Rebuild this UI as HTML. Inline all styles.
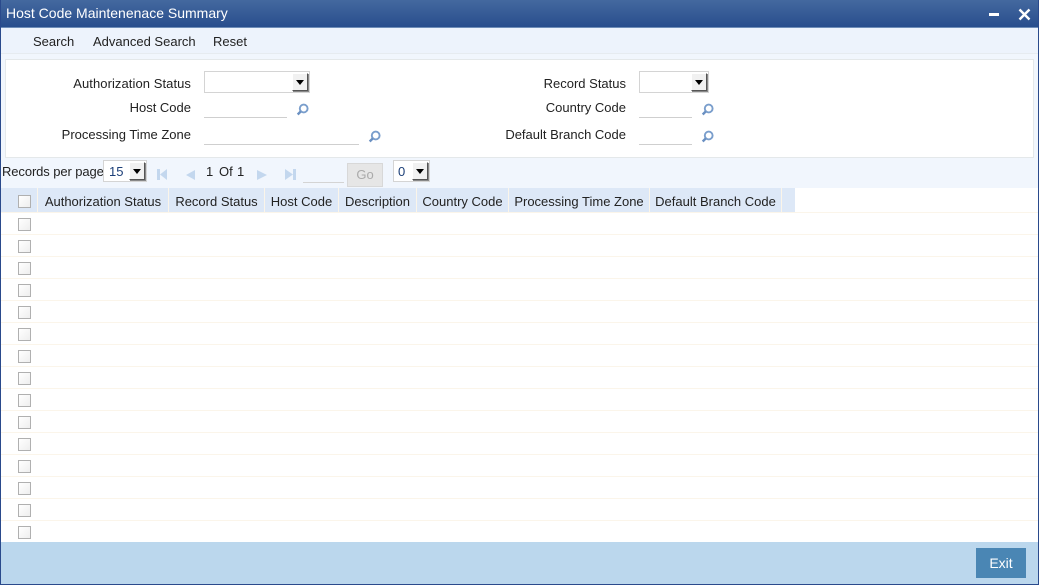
<!DOCTYPE html>
<html><head><meta charset="utf-8">
<style>
html,body{margin:0;padding:0}
body{width:1039px;height:585px;position:relative;overflow:hidden;background:#f1f6fd;font-family:"Liberation Sans",Arial,sans-serif;font-size:13px;color:#222}
.a{position:absolute}
.t{position:absolute;white-space:nowrap;line-height:16px;height:16px}
.r{text-align:right}
.ul{position:absolute;height:1px;background:#cfcfcf}
.sel{position:absolute;background:#fff;border:1px solid #d4d4d4;box-sizing:border-box}
.btn{position:absolute;width:16px;height:18px;box-sizing:border-box;background:#f1f1f1;border:1px solid;border-color:#fff #555 #555 #fff;box-shadow:1px 1px 0 #888}
.btn:after{content:"";position:absolute;left:3px;top:6px;border:4px solid transparent;border-top:5px solid #000;border-bottom:0}
.cb{position:absolute;left:18px;width:13px;height:13px;box-sizing:border-box;border:1px solid #b0b0b0;background:linear-gradient(135deg,#fff,#eee)}
.th{position:absolute;top:188px;height:24px;background:#dde8f7;line-height:27px;white-space:nowrap;text-align:center;border-right:1px solid #fbf5ea;box-sizing:border-box}
.ln{position:absolute;left:1px;right:1px;height:1px;background:#fbf5ea}
</style></head><body>
<div class="a" style="left:0;top:0;width:1039px;height:28px;background:linear-gradient(#44699f,#284e8d);border-bottom:1px solid #6e8db8;box-sizing:border-box"></div>
<div class="t" style="left:6px;top:5px;color:#fff;font-size:14px">Host Code Maintenenace Summary</div>
<div class="a" style="left:989px;top:13px;width:10px;height:3px;background:#fff"></div>
<svg class="a" style="left:1018px;top:8px" width="13" height="13"><path d="M1.5 1.5L11.5 11.5M11.5 1.5L1.5 11.5" stroke="#fff" stroke-width="2.4"/></svg>

<div class="a" style="left:1px;top:28px;width:1037px;height:25px;background:#edf3fc;border-bottom:1px solid #e6ebf0"></div>
<div class="t" style="left:33px;top:34px">Search</div>
<div class="t" style="left:93px;top:34px">Advanced Search</div>
<div class="t" style="left:213px;top:34px">Reset</div>

<div class="a" style="left:5px;top:59px;width:1029px;height:99px;background:#fff;border:1px solid #e4e8ea;box-sizing:border-box"></div>

<div class="t r" style="right:848px;top:76px;letter-spacing:.07px">Authorization Status</div>
<div class="t r" style="right:848px;top:100px">Host Code</div>
<div class="t r" style="right:848px;top:127px">Processing Time Zone</div>
<div class="t r" style="right:413px;top:76px">Record Status</div>
<div class="t r" style="right:413px;top:100px">Country Code</div>
<div class="t r" style="right:413px;top:127px">Default Branch Code</div>

<div class="sel" style="left:204px;top:71px;width:106px;height:22px"><div class="btn" style="left:87px;top:1px"></div></div>
<div class="sel" style="left:639px;top:71px;width:70px;height:22px"><div class="btn" style="left:51px;top:1px"></div></div>
<div class="ul" style="left:204px;top:117px;width:83px"></div>
<div class="ul" style="left:204px;top:144px;width:155px"></div>
<div class="ul" style="left:639px;top:117px;width:53px"></div>
<div class="ul" style="left:639px;top:144px;width:53px"></div>

<svg class="a" style="left:296px;top:103px" width="13" height="13"><circle cx="7.7" cy="5.5" r="3.9" fill="none" stroke="#7a9ecc" stroke-width="1.9"/><path d="M4.8 8.4L1.7 11.5" stroke="#6a90c2" stroke-width="2.4"/></svg>
<svg class="a" style="left:368px;top:130px" width="13" height="13"><circle cx="7.7" cy="5.5" r="3.9" fill="none" stroke="#7a9ecc" stroke-width="1.9"/><path d="M4.8 8.4L1.7 11.5" stroke="#6a90c2" stroke-width="2.4"/></svg>
<svg class="a" style="left:701px;top:103px" width="13" height="13"><circle cx="7.7" cy="5.5" r="3.9" fill="none" stroke="#7a9ecc" stroke-width="1.9"/><path d="M4.8 8.4L1.7 11.5" stroke="#6a90c2" stroke-width="2.4"/></svg>
<svg class="a" style="left:701px;top:130px" width="13" height="13"><circle cx="7.7" cy="5.5" r="3.9" fill="none" stroke="#7a9ecc" stroke-width="1.9"/><path d="M4.8 8.4L1.7 11.5" stroke="#6a90c2" stroke-width="2.4"/></svg>

<div class="t" style="left:2px;top:164px;letter-spacing:-.1px">Records per page</div>
<div class="sel" style="left:103px;top:160px;width:44px;height:22px"><span class="a" style="left:5px;top:3px;line-height:16px;color:#1c3f78">15</span><div class="btn" style="left:25px;top:1px"></div></div>
<svg class="a" style="left:155px;top:168px" width="150" height="14" fill="#c3d7ee">
<rect x="2" y="1" width="3" height="11"/><path d="M12 1V12L5 6.5Z"/>
<path d="M40 2V12L31 7Z"/>
<path d="M102 2V12L112 7Z"/>
<path d="M130 1V12L138 6.5Z"/><rect x="138" y="1" width="3" height="11"/>
</svg>
<div class="t" style="left:206px;top:164px">1</div>
<div class="t" style="left:219px;top:164px">Of</div>
<div class="t" style="left:237px;top:164px">1</div>
<div class="ul" style="left:303px;top:182px;width:41px;background:#d4d4d4"></div>
<div class="a" style="left:347px;top:163px;width:36px;height:24px;background:#e6e6e6;border:1px solid #d8d8d8;box-sizing:border-box;text-align:center;line-height:22px;color:#aaa">Go</div>
<div class="sel" style="left:393px;top:160px;width:37px;height:22px"><span class="a" style="left:4px;top:3px;line-height:16px;color:#1c3f78">0</span><div class="btn" style="left:18px;top:1px"></div></div>

<div class="a" style="left:1px;top:188px;width:36px;height:24px;background:#dde8f7"></div>
<div class="a" style="left:37px;top:188px;width:1px;height:24px;background:#fbf5ea"></div>
<div class="th" style="left:38px;width:131px">Authorization Status</div>
<div class="th" style="left:169px;width:96px">Record Status</div>
<div class="th" style="left:265px;width:74px">Host Code</div>
<div class="th" style="left:339px;width:78px">Description</div>
<div class="th" style="left:417px;width:92px">Country Code</div>
<div class="th" style="left:509px;width:141px">Processing Time Zone</div>
<div class="th" style="left:650px;width:132px">Default Branch Code</div>
<div class="a" style="left:782px;top:188px;width:13px;height:24px;background:#dde8f7"></div>
<div class="a" style="left:795px;top:188px;width:243px;height:24px;background:#fff"></div>
<div class="a" style="left:1px;top:212px;width:1037px;height:330px;background:#fff"></div>
<div class="ln" style="top:212px"></div><div class="ln" style="top:234px"></div><div class="ln" style="top:256px"></div><div class="ln" style="top:278px"></div><div class="ln" style="top:300px"></div><div class="ln" style="top:322px"></div><div class="ln" style="top:344px"></div><div class="ln" style="top:366px"></div><div class="ln" style="top:388px"></div><div class="ln" style="top:410px"></div><div class="ln" style="top:432px"></div><div class="ln" style="top:454px"></div><div class="ln" style="top:476px"></div><div class="ln" style="top:498px"></div><div class="ln" style="top:520px"></div>
<div class="cb" style="top:195px"></div>
<div class="cb" style="top:218px"></div><div class="cb" style="top:240px"></div><div class="cb" style="top:262px"></div><div class="cb" style="top:284px"></div><div class="cb" style="top:306px"></div><div class="cb" style="top:328px"></div><div class="cb" style="top:350px"></div><div class="cb" style="top:372px"></div><div class="cb" style="top:394px"></div><div class="cb" style="top:416px"></div><div class="cb" style="top:438px"></div><div class="cb" style="top:460px"></div><div class="cb" style="top:482px"></div><div class="cb" style="top:504px"></div><div class="cb" style="top:526px"></div>

<div class="a" style="left:1px;top:542px;width:1037px;height:42px;background:#bbd7ed"></div>
<div class="a" style="left:976px;top:548px;width:50px;height:30px;background:#4a86b4;color:#fff;text-align:center;line-height:31px;font-size:14px">Exit</div>

<div class="a" style="left:0;top:0;width:1px;height:585px;background:#2a4a8c"></div>
<div class="a" style="right:0;top:0;width:1px;height:585px;background:#2a4a8c"></div>
<div class="a" style="left:0;top:584px;width:1039px;height:1px;background:#2a4a8c"></div>
</body></html>
